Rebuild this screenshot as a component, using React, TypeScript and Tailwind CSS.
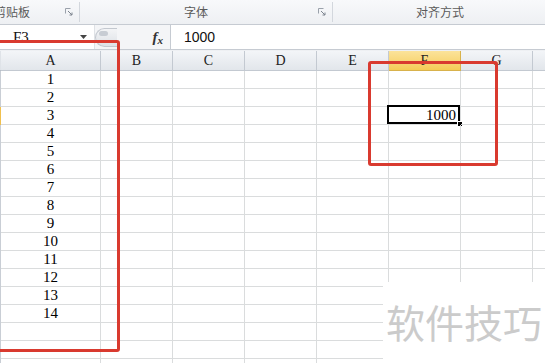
import React from 'react'

const colLetters = ['A', 'B', 'C', 'D', 'E', 'F', 'G', 'H']
const rowCount = 17

const cjk = { fontFamily: '"Noto Sans CJK SC", "Noto Sans", sans-serif' }
const serif = { fontFamily: '"Liberation Serif", "DejaVu Serif", serif' }

const Launcher = () => (
    <svg width="8" height="8" viewBox="0 0 8 8" className="shrink-0">
        <path d="M0.5 0.5h5M0.5 0.5v5" stroke="#9aa1ab" strokeWidth="1" fill="none" />
        <path d="M3 3l4 4M7 4.5V7H4.5" stroke="#7d848e" strokeWidth="1" fill="none" />
    </svg>
)

const Ribbon = () => (
    <div className="flex h-[25px] bg-gradient-to-b from-[#f8f9fb] to-[#eef0f3] border-b border-[#c6cbd2] text-[12px] text-[#5a5a5a]" style={cjk}>
        <div className="w-[79px] flex items-center overflow-hidden pr-[6px]">
            <span className="ml-[-6px] whitespace-nowrap leading-none">剪贴板</span>
            <div className="flex-1" />
            <Launcher />
        </div>
        <div className="w-[1px] bg-[#d3d7dd] my-[2px]" />
        <div className="w-[252px] flex items-center pr-[6px]">
            <div className="flex-1 flex justify-center pl-[6px] pr-[12px] leading-none">字体</div>
            <Launcher />
        </div>
        <div className="w-[1px] bg-[#d3d7dd] my-[2px]" />
        <div className="flex-1 flex items-center justify-center pl-[2px] leading-none">对齐方式</div>
    </div>
)

const FormulaBar = () => (
    <div className="flex h-[25px] bg-[#f4f5f7] border-b border-[#c6cbd2]">
        <div className="w-[95px] flex items-center bg-white border-r border-[#dfe2e6] pl-[13px] pr-[7px]">
            <span className="text-[15px] text-[#111] leading-none" style={serif}>F3</span>
            <div className="flex-1" />
            <svg width="7" height="4" viewBox="0 0 7 4">
                <path d="M0 0h7L3.5 4z" fill="#444" />
            </svg>
        </div>
        <div className="flex items-center w-[75px] pr-[4px]">
            <div className="h-[19px] w-[22px] rounded-l-full border border-r-0 border-[#c3c8cf] bg-gradient-to-b from-[#f3f4f6] to-[#dde1e6] flex items-start pt-[2px] pl-[3px]">
                <div className="w-[9px] h-[5px] rounded-full bg-[#c7ccd3]" />
            </div>
            <div className="flex-1" />
            <span className="italic font-bold text-[15px] text-[#333] leading-none mr-[3px]" style={serif}>
                f<span className="text-[11px] relative top-[2px]">x</span>
            </span>
        </div>
        <div className="flex-1 flex items-center bg-white border-l border-[#c6cbd2] pl-[13px]">
            <span className="text-[14px] text-[#111] leading-none" style={{ fontFamily: '"Liberation Sans", Arial, sans-serif' }}>1000</span>
        </div>
    </div>
)

const Grid = () => (
    <div className="grid grid-cols-[1px_100px_72px_72px_72px_72px_72px_72px_72px] w-max" style={serif}>
        <div className="h-[20px] bg-[#dfe3e8] border-b border-[#b7bec8]" />
        {colLetters.map((c) => (
            <div
                key={c}
                className={
                    c === 'F'
                        ? 'h-[20px] flex items-center justify-center text-[14px] text-[#222] bg-gradient-to-b from-[#fbe39a] to-[#f5cc55] border-r border-b border-[#d8b24c]'
                        : 'h-[20px] flex items-center justify-center text-[14px] text-[#222] bg-gradient-to-b from-[#f3f5f8] to-[#e2e6eb] border-r border-b border-[#c3c9d1]'
                }
            >
                {c}
            </div>
        ))}
        {Array.from({ length: rowCount }).map((_, r) => (
            <React.Fragment key={r}>
                <div className={r === 2 ? 'h-[18px] bg-[#f0c04e]' : 'h-[18px] bg-[#c9ced5]'} />
                {colLetters.map((c) => {
                    const isA = c === 'A'
                    const isF3 = c === 'F' && r === 2
                    return (
                        <div
                            key={c}
                            className={
                                isA
                                    ? 'h-[18px] relative flex items-end justify-center text-[15px] leading-[18px] text-black border-r border-b border-[#dadcdd]'
                                    : 'h-[18px] relative flex items-end justify-end pr-[4px] text-[15px] leading-[18px] text-black border-r border-b border-[#dadcdd]'
                            }
                        >
                            {isA && r < 14 ? r + 1 : null}
                            {isF3 ? (
                                <>
                                    <span>1000</span>
                                    <div className="absolute left-[-2px] top-[-2px] right-0 bottom-0 border-2 border-black" />
                                    <div className="absolute right-[-3px] bottom-[-3px] w-[6px] h-[6px] bg-black border border-white" />
                                </>
                            ) : null}
                        </div>
                    )
                })}
            </React.Fragment>
        ))}
    </div>
)

export default function App() {
    return (
        <div className="relative w-[545px] h-[363px] overflow-hidden bg-white">
            <Ribbon />
            <FormulaBar />
            <div className="h-[1px] bg-[#eef0f3]" />
            <Grid />

            {/* annotation boxes */}
            <div className="absolute left-[-10px] top-[40px] w-[130px] h-[312px] border-[3px] border-[#d93a2f] rounded-[3px]" />
            <div className="absolute left-[368px] top-[61px] w-[130px] h-[105px] border-[3px] border-[#d93a2f] rounded-[3px]" />

            {/* watermark */}
            <div className="absolute left-[383px] top-[282px] right-0 bottom-0 bg-white pl-[3px] pt-[20px]">
                <span className="text-[39px] leading-[39px] text-[#cbcbcb] whitespace-nowrap" style={cjk}>软件技巧</span>
            </div>
        </div>
    )
}
